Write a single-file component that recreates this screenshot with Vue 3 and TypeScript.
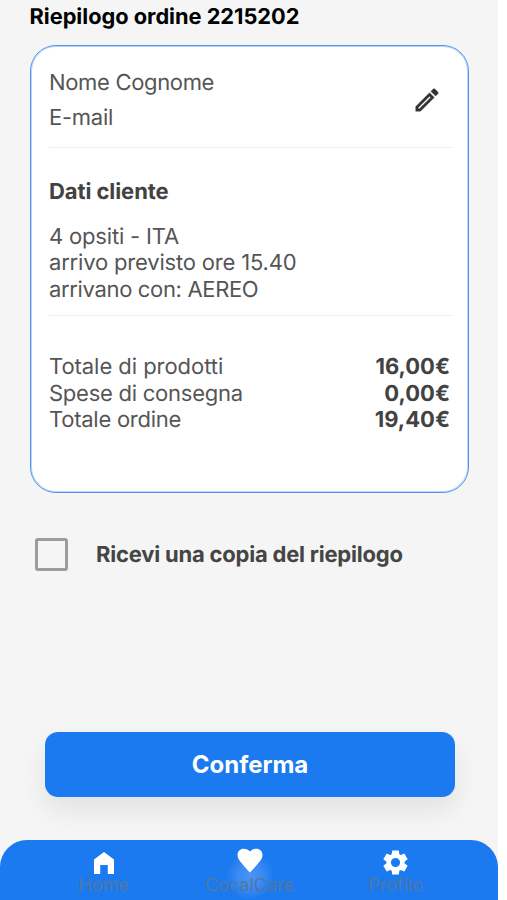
<script setup lang="ts">
import { ref } from 'vue'

interface Total {
  label: string
  amount: string
}

const totals: Total[] = [
  { label: 'Totale di prodotti', amount: '16,00€' },
  { label: 'Spese di consegna', amount: '0,00€' },
  { label: 'Totale ordine', amount: '19,40€' },
]

const sendCopy = ref<boolean>(false)
</script>

<template>
  <main class="screen">
    <h1 class="title">Riepilogo ordine 2215202</h1>

    <section class="card">
      <div class="contact">
        <div>
          <p class="name">Nome Cognome</p>
          <p class="email">E-mail</p>
        </div>
        <button class="edit" type="button">
          <svg viewBox="0 0 24 24">
            <path d="M14.06 9.02l.92.92L5.92 19H5v-.92l9.06-9.06M17.66 3c-.25 0-.51.1-.7.29l-1.83 1.83 3.75 3.75 1.83-1.83c.39-.39.39-1.02 0-1.41l-2.34-2.34c-.2-.2-.45-.29-.71-.29zm-3.6 3.19L3 17.25V21h3.75L17.81 9.94l-3.75-3.75z" />
          </svg>
        </button>
      </div>
      <div class="customer">
        <h2 class="heading">Dati cliente</h2>
        <p>4 opsiti - ITA</p>
        <p>arrivo previsto ore 15.40</p>
        <p class="transport">arrivano con: AEREO</p>
      </div>
      <dl class="totals">
        <div v-for="t in totals" :key="t.label" class="total">
          <dt>{{ t.label }}</dt>
          <dd>{{ t.amount }}</dd>
        </div>
      </dl>
    </section>

    <label class="copy">
      <input v-model="sendCopy" class="box" type="checkbox" />
      <span>Ricevi una copia del riepilogo</span>
    </label>

    <button class="confirm" type="button">Conferma</button>

    <nav class="tabs">
      <a class="tab">
        <svg class="icon" viewBox="0 0 26 26"><path d="M3 9.500 13 2l10 7.500V24h-6.200v-9h-7.600v9H3z" /></svg>
        <span>Home</span>
      </a>
      <a class="tab active">
        <svg class="icon heart" viewBox="0 0 24 24"><path d="M12 22C10.200 20.200 8.600 18.300 6.200 15.500 3.400 12.200 2 10.700 2 8 2 5 4.200 3 7 3c2.100 0 4 1 5 2.200C13 4 14.900 3 17 3c2.800 0 5 2 5 5 0 2.700-1.400 4.200-4.200 7.500-2.400 2.800-4 4.700-5.800 6.500z" /></svg>
        <span>CocalCare</span>
      </a>
      <a class="tab">
        <svg class="icon gear" viewBox="0 0 24 24"><path fill-rule="evenodd" d="M9.250 22l-.4-3.200q-.325-.125-.612-.3-.288-.175-.563-.375L4.700 19.375l-2.750-4.750 2.575-1.950Q4.500 12.500 4.500 12.337v-.675q0-.162.025-.337L1.950 9.375l2.750-4.750 2.975 1.250q.275-.2.575-.375.300-.175.600-.3l.4-3.200h5.500l.4 3.200q.325.125.613.3.287.175.562.375l2.975-1.250 2.750 4.750-2.575 1.950q.025.175.025.337v.675q0 .163-.05.338l2.575 1.950-2.750 4.750-2.950-1.250q-.275.2-.575.375-.300.175-.600.300l-.400 3.200zM12 15.800a3.800 3.800 0 1 0 0-7.600 3.800 3.800 0 0 0 0 7.600z" /></svg>
        <span>Profilo</span>
      </a>
    </nav>
  </main>
</template>

<style>
body {
  margin: 0;
  background: #fff;
}
</style>

<style scoped>
* {
  box-sizing: border-box;
}
.screen {
  display: flex;
  flex-direction: column;
  width: 498px;
  height: 900px;
  overflow: hidden;
  background: #f5f5f5;
  color: #555;
  font-family: Inter, "Liberation Sans", sans-serif;
  font-size: 22px;
  line-height: 26.4px;
  text-rendering: geometricPrecision;
}
h1, h2, p, dl, dd {
  margin: 0;
}
.title {
  padding: 4px 0 0 29.500px;
  color: #000;
  font-size: 21.800px;
  font-weight: 700;
  line-height: 26px;
  letter-spacing: -0.02px;
  white-space: nowrap;
}
.card {
  width: 439.400px;
  height: 449px;
  margin: 15px 0 0 29.600px;
  padding: 0 15px 0 18.400px;
  background: #fff;
  border: 1px solid #4f95f0;
  border-radius: 26px;
  box-shadow: inset 0 0 0 1px rgba(79, 149, 240, 0.4);
}
.contact {
  display: flex;
  justify-content: space-between;
  height: 102px;
  padding-top: 24px;
  border-bottom: 1px solid #ededed;
}
.name {
  margin-bottom: 8.600px;
  letter-spacing: -0.33px;
}
.email {
  letter-spacing: -0.25px;
}
.edit {
  width: 30px;
  height: 30px;
  margin: 15px 11px 0 0;
  padding: 0;
  background: none;
  border: 0;
}
.edit svg {
  display: block;
  width: 30px;
  height: 30px;
  fill: #333;
  stroke: #333;
  stroke-width: 0.3;
}
.customer {
  height: 168px;
  padding-top: 31px;
  border-bottom: 1px solid #ededed;
  letter-spacing: -0.18px;
}
.transport {
  letter-spacing: -0.34px;
}
.heading {
  margin-bottom: 18.400px;
  color: #424242;
  font-size: 22px;
  font-weight: 700;
  line-height: 26.4px;
  letter-spacing: -0.08px;
}
.totals {
  padding: 38.400px 3px 0 0;
}
.total {
  display: flex;
  justify-content: space-between;
  letter-spacing: -0.25px;
}
.total:first-child {
  letter-spacing: -0.05px;
}
.total dd {
  color: #424242;
  font-weight: 700;
  letter-spacing: 0;
}
.copy {
  display: flex;
  align-items: center;
  gap: 28px;
  height: 34px;
  margin: 44px 0 0 35px;
  color: #454545;
  font-weight: 700;
  letter-spacing: -0.21px;
}
.copy span {
  padding-top: 2px;
}
.box {
  appearance: none;
  width: 33px;
  height: 33px;
  margin: 0;
  border: 3px solid #9c9c9f;
  border-radius: 3px;
}
.confirm {
  width: 410px;
  height: 65px;
  margin: 161px 0 0 45px;
  padding: 0;
  background: #1b7af0;
  border: 0;
  border-radius: 13px;
  box-shadow: 0 13px 26px rgba(0, 0, 0, 0.08);
  color: #fff;
  font-family: inherit;
  font-size: 24px;
  font-weight: 700;
}
.tabs {
  display: flex;
  justify-content: center;
  height: 60px;
  margin-top: 43px;
  padding-left: 1px;
  background: #1b7af0;
  border-radius: 27px 27px 0 0;
}
.tab {
  display: flex;
  flex-direction: column;
  align-items: center;
  width: 146px;
  padding-top: 10px;
  color: #5277a1;
  font-size: 18px;
  line-height: 22px;
}
.active {
  padding-top: 5px;
  background: radial-gradient(circle at 73px 36px, #4b94f3 0, #3b8bf2 12px, rgba(27, 122, 240, 0) 24px);
}
.icon {
  display: block;
  flex: none;
  width: 26px;
  height: 26px;
  margin-bottom: -1px;
  fill: #fff;
}
.heart {
  width: 30px;
  height: 30px;
  margin-bottom: 0;
}
.gear {
  width: 29px;
  height: 29px;
  margin: -2px 0 -2px;
}
</style>
